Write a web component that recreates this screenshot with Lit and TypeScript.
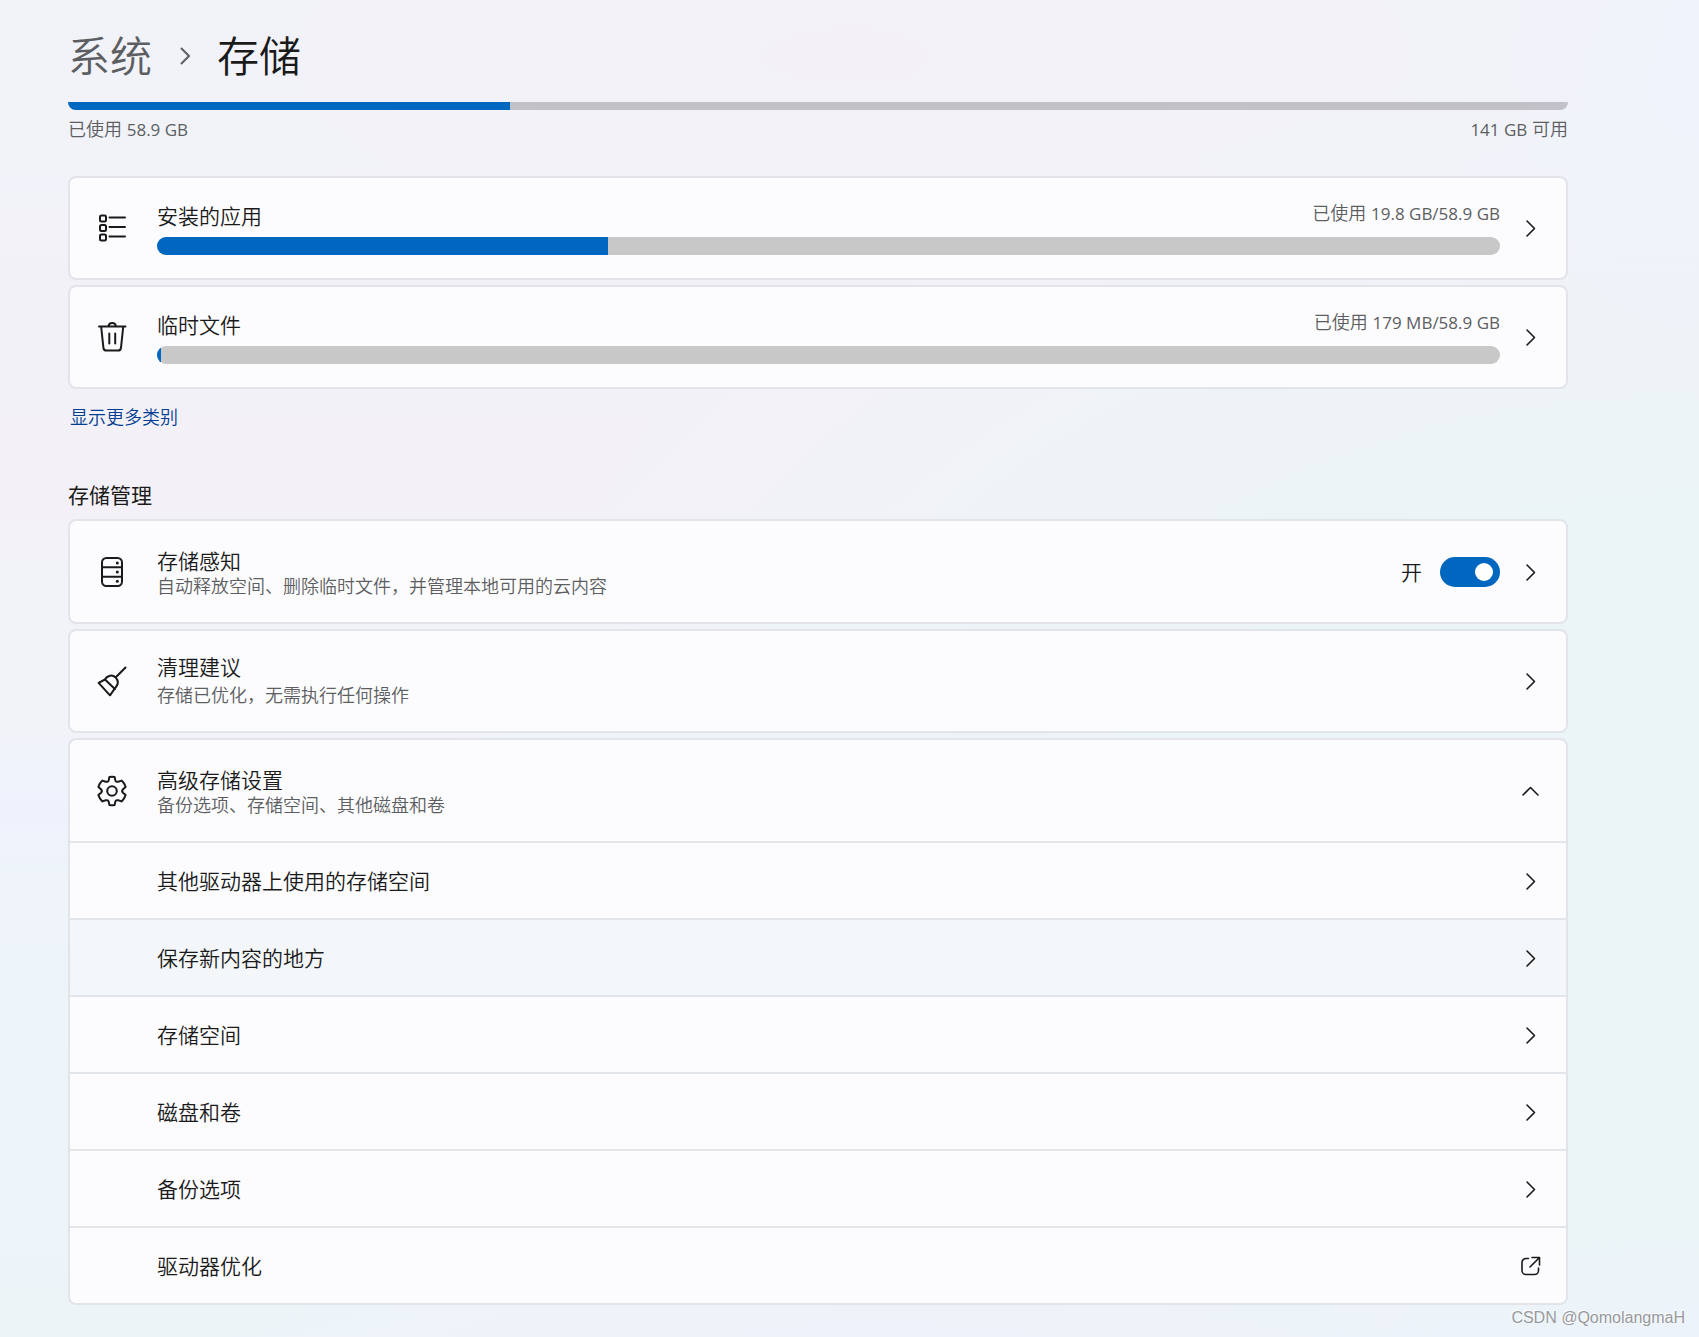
import { LitElement, html, css, svg, nothing } from "lit";
import { customElement, property, state } from "lit/decorators.js";

const icons = {
  apps: svg`
    <g fill="none" stroke="currentColor" stroke-width="2">
      <rect x="4" y="3.5" width="6" height="6" rx="1.5" />
      <rect x="4" y="13" width="6" height="6" rx="1.5" />
      <rect x="4" y="22.5" width="6" height="6" rx="1.5" />
      <path stroke-linecap="round" d="M13.5 5.5H29M13.5 15H29M13.5 24.5H29" />
    </g>`,
  trash: svg`
    <g fill="none" stroke="currentColor" stroke-width="2" stroke-linecap="round" stroke-linejoin="round">
      <path d="M3 5.5H29.5M12.5 5.2C12.8 3.200 14.300 2 16.200 2S19.600 3.200 19.900 5.200" />
      <path d="M5.200 6L7.400 26.600C7.600 28.600 8.700 29.600 10.400 29.600H22C23.700 29.600 24.800 28.600 25 26.600L27.200 6" />
      <path d="M13.300 12.500V22.500M19.200 12.500V22.500" />
    </g>`,
  storage: svg`
    <g fill="none" stroke="currentColor" stroke-width="2">
      <rect x="6" y="2" width="20" height="28" rx="4.500" />
      <path d="M6 11.300H26M6 20.700H26" />
    </g>
    <g fill="currentColor">
      <circle cx="21.300" cy="7" r="1.500" />
      <circle cx="21.300" cy="16" r="1.500" />
      <circle cx="21.300" cy="25.300" r="1.500" />
    </g>`,
  broom: svg`
    <g fill="none" stroke="currentColor" stroke-width="2" stroke-linecap="round" stroke-linejoin="round">
      <path d="M29.500 2.500L19.800 12.200" />
      <path d="M2.600 17.800L9 14.500C10.200 11.600 15.500 8.600 19.600 12.400C23.400 16.300 21.400 20.600 18.900 23.400L14 30.300Z" />
      <path d="M9 14.500L18.900 24" />
    </g>`,
  gear: svg`
    <g fill="none" stroke="currentColor" stroke-width="2" stroke-linejoin="round">
      <circle cx="16" cy="16" r="4.800" />
      <path d="M13.400 1.900Q16 1.400 18.600 1.900L19.300 5.200Q19.900 7.400 22.200 6.700L25.600 5.600Q28.300 8 29.600 11.900L27 14.200Q25.300 16 27 17.800L29.600 20.100Q28.300 24 25.600 26.400L22.200 25.300Q19.900 24.600 19.300 26.800L18.600 30.100Q16 30.600 13.400 30.100L12.700 26.800Q12.100 24.600 9.800 25.300L6.400 26.400Q3.700 24 2.400 20.100L5 17.800Q6.700 16 5 14.200L2.400 11.900Q3.700 8 6.400 5.600L9.800 6.700Q12.100 7.400 12.700 5.200Z" />
    </g>`,
};

const glyphs = {
  right: svg`<path d="M6 3L13.500 10.500L6 18" />`,
  up: svg`<path d="M2 14L9.500 6.500L17 14" />`,
  external: svg`<path d="M7.500 2.500H5A4 4 0 0 0 1 6.500V14.500A4 4 0 0 0 5 18.500H13.500A4 4 0 0 0 17.500 14.500V12M11 1.500H18.500V9M18.500 1.500L9 11" />`,
};

type IconName = keyof typeof icons;
type GlyphName = keyof typeof glyphs;

@customElement("settings-icon")
export class SettingsIcon extends LitElement {
  static styles = css`
    :host { display: block; flex: none; width: 32px; height: 32px; color: #1a1a1a; }
    svg { display: block; width: 100%; height: 100%; }
  `;
  @property() name: IconName = "apps";
  render() {
    return html`<svg viewBox="0 0 32 32" aria-hidden="true">${icons[this.name]}</svg>`;
  }
}

@customElement("settings-glyph")
export class SettingsGlyph extends LitElement {
  static styles = css`
    :host { display: block; flex: none; width: 20px; height: 20px; color: #1a1a1a; }
    svg { display: block; width: 100%; height: 100%; overflow: visible; }
    g { fill: none; stroke: currentColor; stroke-width: 1.6; stroke-linecap: round; stroke-linejoin: round; }
  `;
  @property() name: GlyphName = "right";
  render() {
    return html`<svg viewBox="0 0 20 20" aria-hidden="true"><g>${glyphs[this.name]}</g></svg>`;
  }
}

interface Usage { icon: IconName; title: string; used: string; percent: number; }
interface SubItem { title: string; glyph: GlyphName; active?: boolean; }

const usages: Usage[] = [
  { icon: "apps", title: "安装的应用", used: "19.8 GB/58.9 GB", percent: 33.6 },
  { icon: "trash", title: "临时文件", used: "179 MB/58.9 GB", percent: 0.3 },
];

const subItems: SubItem[] = [
  { title: "其他驱动器上使用的存储空间", glyph: "right" },
  { title: "保存新内容的地方", glyph: "right", active: true },
  { title: "存储空间", glyph: "right" },
  { title: "磁盘和卷", glyph: "right" },
  { title: "备份选项", glyph: "right" },
  { title: "驱动器优化", glyph: "external" },
];

@customElement("app-root")
export class AppRoot extends LitElement {
  static styles = css`
    :host {
      display: block;
      position: relative;
      box-sizing: border-box;
      min-height: 100vh;
      padding: 28px 131px 32px 68px;
      color: #1a1a1a;
      font-family: "Open Sans", "Noto Sans CJK SC", sans-serif;
      font-size: 21px;
      font-weight: 350;
      line-height: 28px;
      background:
        radial-gradient(ellipse 50% 22% at 50% 4%, #f3f1f7 0%, #f3f1f700 100%),
        radial-gradient(ellipse 12% 20% at 100% 6%, #eff3fb 0%, #eff3fb00 100%),
        radial-gradient(ellipse 45% 12% at 55% 104%, #eff1fb 0%, #eff1fb00 100%),
        radial-gradient(ellipse 30% 12% at 100% 104%, #eef2fc 0%, #eef2fc00 100%),
        radial-gradient(ellipse 75% 65% at 100% 68%, #ebf4f7 0%, #ebf4f7 45%, #ebf4f700 100%),
        linear-gradient(180deg, #f1f3f9 0%, #f1f3f9 12%, #f3f1f8 20%, #f3f1f7 38%, #f1f3f9 44%, #f1f3f9 55%, #eef2fd 61%, #eef4f9 67%, #edf4f8 100%);
    }
    * { box-sizing: border-box; }
    a { color: inherit; text-decoration: none; }
    button { font: inherit; color: inherit; background: none; border: 0; text-align: left; cursor: pointer; }
    h1, h2, ul { margin: 0; padding: 0; list-style: none; font: inherit; }
    .crumbs { display: flex; align-items: center; gap: 23px; font-size: 42px; line-height: 56px; }
    .parent { color: #5d5e61; }
    .sep { width: 19px; height: 20px; fill: none; stroke: #5d5e61; stroke-width: 2; }
    .track { overflow: hidden; height: 18px; border-radius: 9px; background: #c8c8c8; }
    .total { height: 8px; margin-top: 18px; border-radius: 0 0 8px 8px; background: #c2c1c7; }
    .fill { height: 100%; background: #0067c0; }
    .small { color: #5d5e61; font-size: 18px; line-height: 22px; }
    .num { font-size: 17px; font-weight: 400; line-height: 18px; }
    .legend { display: flex; justify-content: space-between; margin-top: 8px; }
    .cards { display: flex; flex-direction: column; gap: 5px; }
    .usage { margin-top: 36px; }
    .card { overflow: hidden; border: 2px solid #e2e4ea; border-radius: 8px; background: #fcfcfe; background-clip: padding-box; }
    .row { display: flex; align-items: center; width: 100%; min-height: 100px; padding: 0 25px 0 26px; }
    .tall { min-height: 101px; }
    .text { flex: 1; min-width: 0; margin-left: 29px; }
    .airy { display: flex; flex-direction: column; gap: 3px; padding-bottom: 3px; }
    .top { display: flex; justify-content: space-between; align-items: flex-start; margin: 1px 0 7px; }
    .text + settings-glyph, .end { margin-left: 21px; }
    .title, .desc { display: block; }
    .more { display: block; width: fit-content; margin: 17px 2px 0; color: #003e92; }
    .section { margin: 53px 0 10px; font-weight: 400; }
    .switch { display: flex; align-items: center; gap: 18px; }
    .toggle { appearance: none; display: flex; align-items: center; width: 60px; height: 30px; margin: 0; padding: 0 7px; border-radius: 15px; background: #8a8a8a; cursor: pointer; }
    .toggle::before { content: ""; width: 18px; height: 18px; border-radius: 50%; background: #fff; }
    .toggle:checked { justify-content: flex-end; background: #0067c0; }
    .item { display: flex; align-items: center; min-height: 77px; padding: 0 25px 0 87px; border-top: 2px solid #e2e5ea; }
    .item .title { flex: 1; }
    .active { background: #f4f7fa; }
    .mark { position: absolute; right: 14px; bottom: 8px; color: #98999c; font-family: "Liberation Sans", sans-serif; font-size: 16px; font-weight: 400; line-height: 22px; text-shadow: -1px -1px 0 #fff; }
  `;

  @state() private sense = true;
  @state() private expanded = true;

  private bar(percent: number, label: string, extra = "") {
    return html`<div class="track ${extra}" role="progressbar" aria-label=${label} aria-valuenow=${percent}>
      <div class="fill" style="width:${percent}%"></div>
    </div>`;
  }

  private usage(u: Usage) {
    return html`<a class="card" href="#"><div class="row">
      <settings-icon name=${u.icon}></settings-icon>
      <div class="text">
        <div class="top"><span class="title">${u.title}</span>
          <span class="small">已使用 <span class="num">${u.used}</span></span></div>
        ${this.bar(u.percent, u.title)}
      </div>
      <settings-glyph></settings-glyph>
    </div></a>`;
  }

  render() {
    return html`
      <h1 class="crumbs">
        <a class="parent" href="#">系统</a>
        <svg class="sep" viewBox="0 0 19 20" aria-hidden="true"><path d="M6 2L14 10L6 18" /></svg>
        <span>存储</span>
      </h1>
      ${this.bar(29.46, "存储", "total")}
      <div class="legend small">
        <span>已使用 <span class="num">58.9 GB</span></span>
        <span><span class="num">141 GB</span> 可用</span>
      </div>
      <div class="cards usage">${usages.map((u) => this.usage(u))}</div>
      <a class="more small" href="#">显示更多类别</a>

      <h2 class="section">存储管理</h2>
      <div class="cards">
        <div class="card"><div class="row tall">
          <settings-icon name="storage"></settings-icon>
          <a class="text" href="#">
            <span class="title">存储感知</span>
            <span class="desc small">自动释放空间、删除临时文件，并管理本地可用的云内容</span>
          </a>
          <div class="switch">
            <label for="sense">${this.sense ? "开" : "关"}</label>
            <input id="sense" class="toggle" type="checkbox" role="switch" .checked=${this.sense}
              @change=${(e: Event) => (this.sense = (e.target as HTMLInputElement).checked)} />
          </div>
          <settings-glyph class="end"></settings-glyph>
        </div></div>
        <a class="card" href="#"><div class="row">
          <settings-icon name="broom"></settings-icon>
          <div class="text airy">
            <span class="title">清理建议</span>
            <span class="desc small">存储已优化，无需执行任何操作</span>
          </div>
          <settings-glyph></settings-glyph>
        </div></a>
        <div class="card">
          <button class="row tall" aria-expanded=${this.expanded} @click=${() => (this.expanded = !this.expanded)}>
            <settings-icon name="gear"></settings-icon>
            <span class="text">
              <span class="title">高级存储设置</span>
              <span class="desc small">备份选项、存储空间、其他磁盘和卷</span>
            </span>
            <settings-glyph name="up"></settings-glyph>
          </button>
          ${this.expanded
            ? html`<ul>${subItems.map((s) => html`<li>
                <a class="item ${s.active ? "active" : ""}" href="#">
                  <span class="title">${s.title}</span>
                  <settings-glyph name=${s.glyph}></settings-glyph>
                </a></li>`)}</ul>`
            : nothing}
        </div>
      </div>
      <span class="mark">CSDN @QomolangmaH</span>
    `;
  }
}
